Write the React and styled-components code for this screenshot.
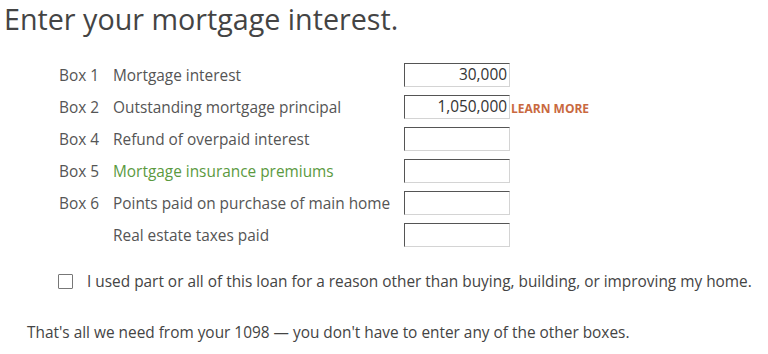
import React from "react";
import styled, { createGlobalStyle } from "styled-components";

const Global = createGlobalStyle`
  html, body { margin: 0; padding: 0; background: #fff; }
  body { font-family: "Open Sans", "Noto Sans", sans-serif; color: #555; }
`;

const Page = styled.div`
  width: 768px;
  height: 354px;
  overflow: hidden;
  padding: 0 0 0 4px;
  box-sizing: border-box;
`;

const Heading = styled.h1`
  margin: 0;
  font-size: 28.7px;
  font-weight: 400;
  line-height: 38px;
  color: #444;
`;

const Form = styled.div`
  margin-top: 21px;
  padding-left: 55px;
  display: grid;
  grid-template-columns: 54px 291px 106px auto;
  grid-auto-rows: 32px;
  align-items: center;
`;

const BoxNo = styled.span`
  font-size: 15.4px;
  color: #555;
`;

const Label = styled.span`
  font-size: 15.4px;
  color: ${(p) => (p.$green ? "#5b9a3f" : "#555")};
`;

const Field = styled.div`
  height: 24px;
  box-sizing: border-box;
  border-top: 1.5px solid #555;
  border-left: 1.5px solid #555;
  border-right: 1px solid #d4d4d4;
  border-bottom: 1px solid #d4d4d4;
  font-size: 15.4px;
  color: #333;
  text-align: right;
  padding-right: 2px;
  line-height: 21px;
`;

const Learn = styled.a`
  font-size: 12px;
  font-weight: 700;
  color: #c9693f;
  padding-left: 1px;
`;

const CheckRow = styled.label`
  display: flex;
  align-items: center;
  gap: 14px;
  margin-top: 20px;
  padding-left: 54px;
  font-size: 15.4px;
  color: #444;
`;

const Box = styled.span`
  width: 13px;
  height: 13px;
  border: 1px solid #777;
  border-radius: 1px;
  flex: none;
`;

const Note = styled.p`
  margin: 30px 0 0 23px;
  font-size: 15.4px;
  color: #444;
`;

const rows = [
  { no: "Box 1", label: "Mortgage interest", value: "30,000" },
  { no: "Box 2", label: "Outstanding mortgage principal", value: "1,050,000", learn: true },
  { no: "Box 4", label: "Refund of overpaid interest" },
  { no: "Box 5", label: "Mortgage insurance premiums", green: true },
  { no: "Box 6", label: "Points paid on purchase of main home" },
  { no: "", label: "Real estate taxes paid" },
];

export default function App() {
  return (
    <Page>
      <Global />
      <Heading>Enter your mortgage interest.</Heading>
      <Form>
        {rows.map((r, i) => (
          <React.Fragment key={i}>
            <BoxNo>{r.no}</BoxNo>
            <Label $green={r.green}>{r.label}</Label>
            <Field>{r.value || ""}</Field>
            <span>{r.learn ? <Learn>LEARN MORE</Learn> : null}</span>
          </React.Fragment>
        ))}
      </Form>
      <CheckRow>
        <Box />
        I used part or all of this loan for a reason other than buying, building, or improving my home.
      </CheckRow>
      <Note>That's all we need from your 1098 — you don't have to enter any of the other boxes.</Note>
    </Page>
  );
}
